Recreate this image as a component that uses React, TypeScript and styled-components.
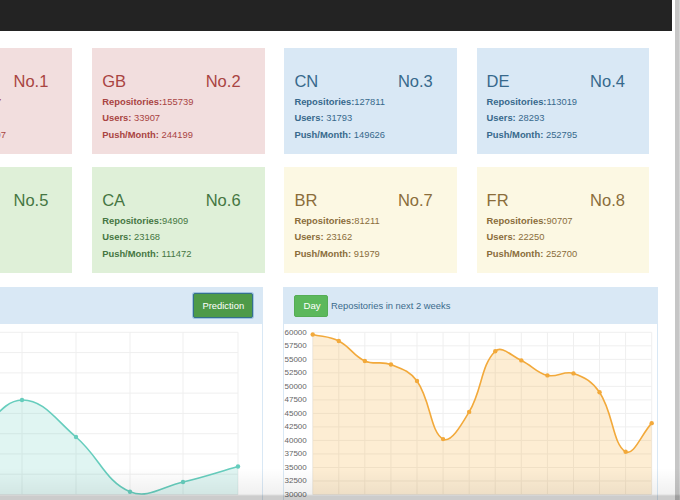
import React from 'react';
import styled, { createGlobalStyle } from 'styled-components';

const GlobalStyle = createGlobalStyle`
  html, body { margin: 0; padding: 0; background: #fff; overflow: hidden; }
  body { font-family: "Liberation Sans", Arial, Helvetica, sans-serif; }
`;

type Tone = 'danger' | 'info' | 'success' | 'warning';

const tones: Record<Tone, { bg: string; fg: string }> = {
  danger: { bg: '#f2dede', fg: '#a94442' },
  info: { bg: '#d9e8f5', fg: '#37698c' },
  success: { bg: '#dff0d8', fg: '#457642' },
  warning: { bg: '#fcf8e3', fg: '#8a6d3b' },
};

const Frame = styled.div`
  display: flex;
  width: 680px;
  height: 500px;
  overflow: hidden;
  position: relative;
  background: #fff;
`;

const Main = styled.div`
  flex: 0 0 672px;
  overflow: hidden;
  display: flex;
  flex-direction: column;
`;

const Gutter = styled.div`
  flex: 0 0 3px;
  background: #fff;
`;

const ScrollTrack = styled.div`
  flex: 0 0 5px;
  background: linear-gradient(to right, #c6c6c6 0, #c6c6c6 70%, #dcdcdc 100%);
`;

const TopBar = styled.header`
  flex: none;
  height: 31px;
  background: #232323;
`;

const Content = styled.main`
  margin-left: -100px;
  padding-top: 17px;
  display: flex;
  flex-direction: column;
  gap: 14px;
`;

const CardGrid = styled.section`
  display: grid;
  grid-template-columns: repeat(4, 172.4px);
  column-gap: 19.8px;
  row-gap: 13px;
`;

const Card = styled.div<{ $tone: Tone }>`
  box-sizing: border-box;
  height: 106px;
  padding: 23px 24px 10px 10px;
  background: ${(p) => tones[p.$tone].bg};
  color: ${(p) => tones[p.$tone].fg};
`;

const CardHead = styled.div`
  display: flex;
  justify-content: space-between;
  font-size: 16.5px;
  line-height: 20px;
  margin-bottom: 2.6px;
`;

const Stat = styled.div`
  font-size: 9.4px;
  line-height: 16.8px;
  white-space: nowrap;
  b { font-weight: 700; }
`;

const ChartRow = styled.section`
  display: grid;
  grid-template-columns: 363.3px 375px;
  column-gap: 20px;
`;

const Panel = styled.div`
  display: flex;
  flex-direction: column;
`;

const PanelHeader = styled.div<{ $end?: boolean }>`
  box-sizing: border-box;
  height: 37px;
  display: flex;
  align-items: center;
  justify-content: ${(p) => (p.$end ? 'flex-end' : 'flex-start')};
  gap: 3px;
  padding: 0 ${(p) => (p.$end ? '10px' : '0')} 0 ${(p) => (p.$end ? '0' : '10.7px')};
  background: #d9e8f5;
`;

const PanelBody = styled.div`
  border: 1px solid #d9e8f5;
  border-top: none;
  background: #fff;
  height: 190px;
  svg { display: block; }
`;

const Button = styled.button<{ $variant: 'focus' | 'plain' }>`
  box-sizing: border-box;
  font-family: "Liberation Sans", Arial, sans-serif;
  font-size: ${(p) => (p.$variant === 'focus' ? '9.4px' : '9.6px')};
  color: #fff;
  padding: 0 ${(p) => (p.$variant === 'focus' ? '8px' : '8.5px')};
  height: ${(p) => (p.$variant === 'focus' ? '25px' : '22px')};
  width: ${(p) => (p.$variant === 'focus' ? '60px' : '34px')};
  border-radius: 2px;
  background: ${(p) => (p.$variant === 'focus' ? '#4e9a48' : '#5cb85c')};
  border: 1px solid ${(p) => (p.$variant === 'focus' ? '#35708c' : '#55ad55')};
  box-shadow: ${(p) => (p.$variant === 'focus' ? '0 0 0 1px rgba(90,150,200,0.45)' : 'none')};
  cursor: pointer;
`;

const Caption = styled.span`
  font-size: 9.4px;
  color: #3b6b8c;
`;

const Vignette = styled.div`
  position: absolute;
  left: 0;
  right: 0;
  bottom: 0;
  height: 32px;
  pointer-events: none;
  background: linear-gradient(
    to bottom,
    rgba(0, 0, 0, 0) 0,
    rgba(0, 0, 0, 0.06) 26px,
    rgba(0, 0, 0, 0.2) 28px,
    rgba(0, 0, 0, 0.2) 100%
  );
`;

type Pt = [number, number];

function splinePath(pts: Pt[], t = 0.4): string {
  const cps = pts.map((cur, i) => {
    const prev = pts[i - 1] || cur;
    const next = pts[i + 1] || cur;
    const d01 = Math.hypot(cur[0] - prev[0], cur[1] - prev[1]);
    const d12 = Math.hypot(next[0] - cur[0], next[1] - cur[1]);
    const sum = d01 + d12 || 1;
    const fa = (t * d01) / sum;
    const fb = (t * d12) / sum;
    return {
      prev: [cur[0] - fa * (next[0] - prev[0]), cur[1] - fa * (next[1] - prev[1])],
      next: [cur[0] + fb * (next[0] - prev[0]), cur[1] + fb * (next[1] - prev[1])],
    };
  });
  let d = `M${pts[0][0]},${pts[0][1]}`;
  for (let i = 1; i < pts.length; i++) {
    const a = cps[i - 1].next;
    const b = cps[i].prev;
    d += ` C${a[0]},${a[1]} ${b[0]},${b[1]} ${pts[i][0]},${pts[i][1]}`;
  }
  return d;
}

type ChartProps = {
  width: number;
  height: number;
  points: Pt[];
  gridX: number[];
  gridY: number[];
  top: number;
  bottom: number;
  left: number;
  right: number;
  line: string;
  fill: string;
  labels?: { y: number; text: string }[];
};

const LineChart: React.FC<ChartProps> = ({ width, height, points, gridX, gridY, top, bottom, left, right, line, fill, labels }) => {
  const path = splinePath(points);
  const first = points[0];
  const last = points[points.length - 1];
  const area = `${path} L${last[0]},${bottom} L${first[0]},${bottom} Z`;
  return (
    <svg width={width} height={height} viewBox={`0 0 ${width} ${height}`}>
      {gridY.map((y) => (
        <line key={`h${y}`} x1={left} x2={right} y1={y} y2={y} stroke="#efefef" strokeWidth={1} />
      ))}
      {gridX.map((x) => (
        <line key={`v${x}`} x1={x} x2={x} y1={top} y2={bottom} stroke="#efefef" strokeWidth={1} />
      ))}
      <path d={area} fill={fill} />
      <path d={path} fill="none" stroke={line} strokeWidth={1.6} />
      {points.map(([x, y], i) => (
        <circle key={i} cx={x} cy={y} r={2.2} fill={line} />
      ))}
      {labels?.map((l) => (
        <text
          key={l.text}
          x={0.5}
          y={l.y}
          dominantBaseline="central"
          fontSize={8}
          fill="#666"
          fontFamily='"Liberation Sans", Arial, sans-serif'
        >
          {l.text}
        </text>
      ))}
    </svg>
  );
};

const cards: { code: string; rank: number; repos: string; users: string; push: string; tone: Tone }[] = [
  { code: 'US', rank: 1, repos: '713257', users: '183425', push: '1042297', tone: 'danger' },
  { code: 'GB', rank: 2, repos: '155739', users: '33907', push: '244199', tone: 'danger' },
  { code: 'CN', rank: 3, repos: '127811', users: '31793', push: '149626', tone: 'info' },
  { code: 'DE', rank: 4, repos: '113019', users: '28293', push: '252795', tone: 'info' },
  { code: 'JP', rank: 5, repos: '98125', users: '25531', push: '99314', tone: 'success' },
  { code: 'CA', rank: 6, repos: '94909', users: '23168', push: '111472', tone: 'success' },
  { code: 'BR', rank: 7, repos: '81211', users: '23162', push: '91979', tone: 'warning' },
  { code: 'FR', rank: 8, repos: '90707', users: '22250', push: '252700', tone: 'warning' },
];

// Right chart (repositories in next 2 weeks)
const repoValues = [59600, 58400, 54700, 54050, 50980, 40250, 45280, 56500, 54800, 52030, 52400, 48900, 37900, 43200];
const rTop = 8.3;
const rBottom = 170.5;
const rStep = (rBottom - rTop) / 12;
const rX0 = 28.7;
const rXStep = (367.7 - rX0) / 13;
const rPoints: Pt[] = repoValues.map((v, i) => [rX0 + i * rXStep, rTop + ((60000 - v) / 30000) * (rBottom - rTop)]);
const rLabels = Array.from({ length: 13 }, (_, i) => ({ y: rTop + i * rStep, text: String(60000 - i * 2500) }));

// Left chart (prediction)
const lTop = 8.3;
const lBottom = 170.5;
const lStep = (lBottom - lTop) / 8;
const lPoints: Pt[] = [
  [13, 132],
  [67, 116],
  [121, 76],
  [175, 113],
  [229, 167.7],
  [282, 158],
  [337, 142.5],
];

export default function App() {
  return (
    <>
      <GlobalStyle />
      <Frame>
        <Main>
          <TopBar />
          <Content>
            <CardGrid>
              {cards.map((c) => (
                <Card key={c.code} $tone={c.tone}>
                  <CardHead>
                    <span>{c.code}</span>
                    <span>No.{c.rank}</span>
                  </CardHead>
                  <Stat>
                    <b>Repositories:</b>
                    {c.repos}
                  </Stat>
                  <Stat>
                    <b>Users:</b> {c.users}
                  </Stat>
                  <Stat>
                    <b>Push/Month:</b> {c.push}
                  </Stat>
                </Card>
              ))}
            </CardGrid>
            <ChartRow>
              <Panel>
                <PanelHeader $end>
                  <Button $variant="focus">Prediction</Button>
                </PanelHeader>
                <PanelBody>
                  <LineChart
                    width={361.3}
                    height={190}
                    points={lPoints}
                    gridX={lPoints.map((p) => p[0])}
                    gridY={Array.from({ length: 9 }, (_, i) => lTop + i * lStep)}
                    top={lTop}
                    bottom={lBottom}
                    left={0}
                    right={337}
                    line="#66cdbd"
                    fill="rgba(102, 205, 189, 0.2)"
                  />
                </PanelBody>
              </Panel>
              <Panel>
                <PanelHeader>
                  <Button $variant="plain">Day</Button>
                  <Caption>Repositories in next 2 weeks</Caption>
                </PanelHeader>
                <PanelBody>
                  <LineChart
                    width={373}
                    height={190}
                    points={rPoints}
                    gridX={rPoints.map((p) => p[0])}
                    gridY={rLabels.map((l) => l.y)}
                    top={rTop}
                    bottom={rBottom}
                    left={rX0}
                    right={367.7}
                    line="#f2a93b"
                    fill="rgba(245, 166, 35, 0.2)"
                    labels={rLabels}
                  />
                </PanelBody>
              </Panel>
            </ChartRow>
          </Content>
        </Main>
        <Gutter />
        <ScrollTrack />
        <Vignette />
      </Frame>
    </>
  );
}
